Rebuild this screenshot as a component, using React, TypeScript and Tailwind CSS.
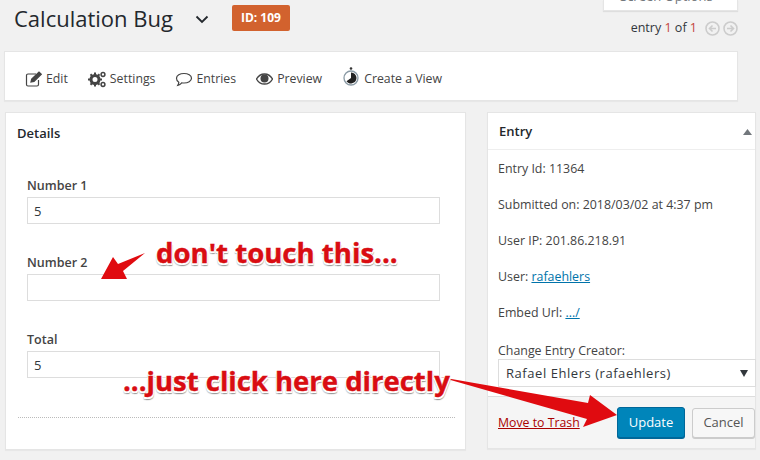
import React from "react";

const font = "font-['Open_Sans','Noto_Sans',sans-serif]";

function Field({ label, value, mt }: { label: string; value: string; mt: string }) {
  return (
    <div className={mt}>
      <div className="text-[12.5px] font-semibold leading-[17px] text-[#444]">{label}</div>
      <div className="mt-[3px] h-[27px] w-[413px] border border-[#ddd] bg-white pl-[6px] text-[13px] leading-[26px] text-[#32373c]">{value}</div>
    </div>
  );
}

function Tool({ icon, label, gap = "gap-[4px]" }: { icon: React.ReactNode; label: string; gap?: string }) {
  return (
    <div className={`flex items-center ${gap} text-[12.3px] text-[#444]`}>
      {icon}
      <span>{label}</span>
    </div>
  );
}

const annotation = "absolute whitespace-nowrap font-bold text-[#d90d12] [-webkit-text-stroke:0.4px_#d90d12] [text-shadow:1px_0_0_#fff,-1px_0_0_#fff,0_1px_0_#fff,0_-1px_0_#fff,1px_2px_0_#fff,-1px_2px_0_#fff,1px_3px_1px_#999,-1px_3px_1px_#bbb]";

export default function App() {
  return (
    <div className={`relative h-[460px] w-[760px] overflow-hidden bg-[#f1f1f1] ${font}`}>
      <div className="flex h-[51px] pl-[14px] pr-[22px]">
        <div className="flex h-[36px] items-center">
          <span className="text-[22px] leading-none text-[#23282d]">Calculation Bug</span>
          <svg className="ml-[22px] mt-[3px]" width="14" height="9" viewBox="0 0 14 9" fill="none" stroke="#23282d" strokeWidth="1.8"><path d="M1.5 1.5 7 7l5.5-5.5" /></svg>
          <span className="ml-[23px] flex h-[26px] w-[58px] items-center justify-center rounded-[2px] bg-[#d2622e] text-[12px] font-bold text-[#fff]">ID: 109</span>
        </div>
        <div className="ml-auto flex w-[135px] flex-col items-end">
          <div className="relative h-[11px] w-[135px] overflow-hidden border border-t-0 border-[#e5e5e5] bg-white shadow-[0_1px_1px_rgba(0,0,0,0.08)]">
            <span className="absolute left-[16px] top-[-13px] text-[13px] leading-[18px] text-[#72777c]">Screen Options</span>
          </div>
          <div className="mt-[8px] flex items-center">
            <span className="text-[12.5px] text-[#32373c]">entry <span className="text-[#c4433a]">1</span> of <span className="text-[#c4433a]">1</span></span>
            <svg className="ml-[8px]" width="15" height="15" viewBox="0 0 15 15" fill="none" stroke="#ccc" strokeWidth="1.6"><circle cx="7.5" cy="7.5" r="6.5" /><path d="M11 7.5H4.5M7.5 4.5l-3 3 3 3" /></svg>
            <svg className="ml-[3px]" width="15" height="15" viewBox="0 0 15 15" fill="none" stroke="#ccc" strokeWidth="1.6"><circle cx="7.5" cy="7.5" r="6.5" /><path d="M4 7.5h6.5M7.5 4.5l3 3-3 3" /></svg>
          </div>
        </div>
      </div>

      <div className="ml-[4px] flex h-[50px] w-[734px] items-center border border-[#e5e5e5] bg-white pl-[20px] pt-[6px] shadow-[0_1px_1px_rgba(0,0,0,0.04)]">
        <Tool label="Edit" gap="gap-[3px]" icon={
          <svg width="18" height="16" viewBox="0 0 18 16" fill="none" stroke="#444" strokeWidth="1.2"><path d="M11 3H3a1.5 1.5 0 0 0-1.5 1.5v9A1.5 1.5 0 0 0 3 15h9a1.5 1.5 0 0 0 1.5-1.5V9" /><path d="M6 11l.7-3L14 1l2.3 2.3L9 10.4z" fill="#444" /></svg>
        } />
        <div className="ml-[20px]"><Tool label="Settings" gap="gap-[3px]" icon={
          <svg width="19" height="17" viewBox="0 0 19 17" fill="#444">
            <circle cx="7" cy="8.5" r="4" fill="none" stroke="#444" strokeWidth="3" />
            <path d="M6 1.5h2V4H6zM6 13h2v2.500H6zM0 7.500h2.500v2H0zM11.500 7.500H14v2h-2.500zM1.800 4l1.400-1.400L5 4.400 3.600 5.800zM9 12.600l1.400-1.400 1.800 1.800-1.400 1.400zM10.800 2.600 12.200 4l-1.800 1.800L9 4.400zM3.600 11.200 5 12.600 3.200 14.400 1.800 13z" />
            <circle cx="15" cy="3.500" r="1.900" fill="none" stroke="#444" strokeWidth="1.500" />
            <circle cx="15" cy="13.500" r="1.900" fill="none" stroke="#444" strokeWidth="1.500" />
          </svg>
        } /></div>
        <div className="ml-[20px]"><Tool label="Entries" gap="gap-[3px]" icon={
          <svg width="18" height="16" viewBox="0 0 18 16" fill="none" stroke="#444" strokeWidth="1.2"><path d="M9 2.500c4 0 7.500 2 7.500 4.800S13 12 9 12c-.8 0-1.500 0-2.200-.2C5.800 13 4.500 14 2.800 14.300c.6-.9 1-1.800 1-3C2.200 10.400 1.500 9 1.500 7.300 1.500 4.500 5 2.500 9 2.500z" /></svg>
        } /></div>
        <div className="ml-[20px]"><Tool label="Preview" gap="gap-[4px]" icon={
          <svg width="17" height="12" viewBox="0 0 17 12"><path d="M.5 6C2.500 2.500 5.300 1 8.500 1s6 1.500 8 5c-2 3.500-4.800 5-8 5s-6-1.500-8-5z" fill="none" stroke="#444" strokeWidth="1.300" /><circle cx="8.500" cy="5.500" r="4" fill="#444" /></svg>
        } /></div>
        <div className="ml-[21px]"><Tool label="Create a View" gap="gap-[5px]" icon={
          <svg className="mb-[5px]" width="16" height="20" viewBox="0 0 16 20">
            <circle cx="8" cy="1.500" r="1.300" fill="#333" />
            <circle cx="8" cy="11" r="7" fill="#fff" stroke="#8a9aa5" strokeWidth="1.300" />
            <path d="M8 5.500a5.500 5.500 0 1 1-4.500 8.700L8 11z" fill="#222" />
          </svg>
        } /></div>
      </div>

      <div className="mt-[11px] flex items-start pl-[5px]">
        <div className="h-[338px] w-[461px] border border-[#e5e5e5] bg-white shadow-[0_1px_1px_rgba(0,0,0,0.04)]">
          <div className="pl-[11px] pt-[11px] text-[13px] font-semibold leading-[18px] text-[#23282d]">Details</div>
          <div className="pl-[21px]">
            <Field mt="mt-[35px]" label="Number 1" value="5" />
            <Field mt="mt-[30px]" label="Number 2" value="" />
            <Field mt="mt-[30px]" label="Total" value="5" />
          </div>
          <div className="ml-[12px] mt-[39px] w-[437px] border-t border-dotted border-[#bbb]" />
        </div>

        <div className="ml-[21px] flex h-[337px] w-[269px] flex-col border border-[#e5e5e5] bg-white shadow-[0_1px_1px_rgba(0,0,0,0.04)]">
          <div className="flex h-[37px] flex-none items-center justify-between border-b border-[#eee] pl-[11px] pr-[3px] pt-[1px]">
            <span className="text-[13px] font-semibold text-[#23282d]">Entry</span>
            <svg width="9" height="6" viewBox="0 0 9 6" fill="#72777c"><path d="M4.500 0 9 6H0z" /></svg>
          </div>
          <div className="flex-1 pl-[10px] pt-[10px] text-[12.4px] text-[#444]">
            <div className="flex h-[18px] items-center">Entry Id: 11364</div>
            <div className="mt-[18px] flex h-[18px] items-center">Submitted on: 2018/03/02 at 4:37 pm</div>
            <div className="mt-[18px] flex h-[18px] items-center">User IP: 201.86.218.91</div>
            <div className="mt-[18px] flex h-[18px] items-center">User:&nbsp;<span className="text-[#0073aa] underline">rafaehlers</span></div>
            <div className="mt-[18px] flex h-[18px] items-center">Embed Url:&nbsp;<span className="text-[#0073aa] underline">.../</span></div>
            <div className="mt-[20px] flex h-[18px] items-center">Change Entry Creator:</div>
            <div className="-mt-px flex h-[28px] w-[258px] items-center justify-between border border-[#ddd] bg-white pl-[7px] pr-[7px] pt-[1px] text-[13px] tracking-[0.55px] text-[#32373c]">
              <span>Rafael Ehlers (rafaehlers)</span>
              <svg width="8" height="7" viewBox="0 0 8 7" fill="#32373c"><path d="M0 0h8L4 7z" /></svg>
            </div>
          </div>
          <div className="flex h-[52px] flex-none items-center border-t border-[#ddd] bg-[#f5f5f5] pl-[10px]">
            <span className="mt-[1px] w-[82px] whitespace-nowrap text-[12.3px] text-[#a00] underline">Move to Trash</span>
            <div className="ml-[37px] flex h-[31px] w-[68px] items-center justify-center rounded-[3px] border border-[#006799] bg-[#0085ba] text-[13px] text-white shadow-[0_1px_0_#006799]">Update</div>
            <div className="ml-[7px] flex h-[30px] w-[63px] items-center justify-center rounded-[3px] border border-[#ccc] bg-[#f7f7f7] text-[13px] text-[#555] shadow-[0_1px_0_#ccc]">Cancel</div>
          </div>
        </div>
      </div>

      <svg className="absolute left-0 top-0" width="760" height="460" viewBox="0 0 760 460" fill="#e00b10">
        <path d="M101 279 113 257 118 264 145 253 123 271 127 279z" />
        <path d="M440 377 588 403 590 395 617 415 583 427 587 419z" />
      </svg>
      <span className={`${annotation} left-[156px] top-[232px] text-[27.6px] leading-[40px]`}>don't touch this...</span>
      <span className={`${annotation} left-[123px] top-[361px] text-[27.5px] leading-[40px]`}>...just click here directly</span>
    </div>
  );
}
